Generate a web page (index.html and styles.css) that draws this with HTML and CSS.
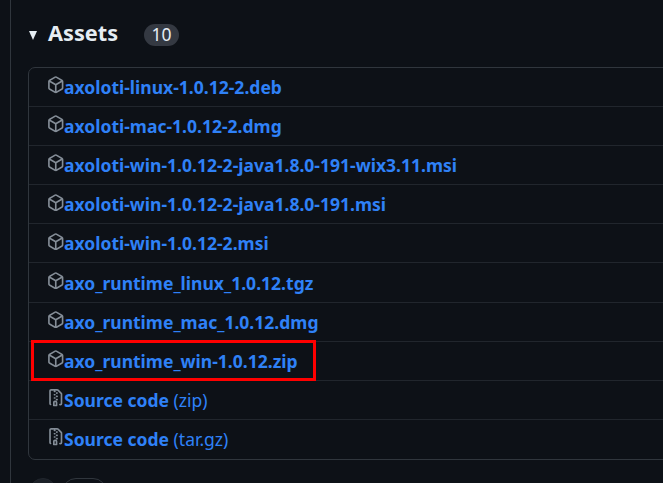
FILE: index.html
```html
<!DOCTYPE html>
<html lang="en">
<head>
<meta charset="utf-8">
<title>Assets</title>
<link rel="stylesheet" href="styles.css">
</head>
<body>
<svg width="0" height="0" class="sprites">
  <symbol id="package" viewBox="0 0 16 16"><path d="m8.878.392 5.25 3.045c.54.314.872.89.872 1.514v6.098a1.75 1.75 0 0 1-.872 1.514l-5.25 3.045a1.75 1.75 0 0 1-1.756 0l-5.25-3.045A1.75 1.75 0 0 1 1 11.049V4.951c0-.624.332-1.201.872-1.514L7.122.392a1.75 1.75 0 0 1 1.756 0ZM7.875 1.69l-4.63 2.685L8 7.133l4.755-2.758-4.63-2.685a.248.248 0 0 0-.25 0ZM2.5 5.677v5.372c0 .09.047.171.125.216l4.625 2.683V8.432Zm6.25 8.271 4.625-2.683a.25.25 0 0 0 .125-.216V5.677L8.75 8.432Z"/></symbol>
  <symbol id="file-zip" viewBox="0 0 16 16"><path d="M3.5 1.75v11.5c0 .09.048.173.126.217a.75.75 0 0 1-.752 1.298A1.748 1.748 0 0 1 2 13.25V1.75C2 .784 2.784 0 3.75 0h5.586c.464 0 .909.185 1.237.513l2.914 2.914c.329.328.513.773.513 1.237v8.586A1.75 1.75 0 0 1 12.25 15h-.5a.75.75 0 0 1 0-1.5h.5a.25.25 0 0 0 .25-.25V4.664a.25.25 0 0 0-.073-.177L9.513 1.573a.25.25 0 0 0-.177-.073H7.25a.75.75 0 0 1 0 1.5h-.5a.75.75 0 0 1 0-1.5h-3a.25.25 0 0 0-.25.25Zm3.75 8.75h.5c.966 0 1.75.784 1.75 1.75v3a.75.75 0 0 1-.75.75h-2.5a.75.75 0 0 1-.75-.75v-3c0-.966.784-1.75 1.75-1.75ZM6 5.25a.75.75 0 0 1 .75-.75h.5a.75.75 0 0 1 0 1.5h-.5A.75.75 0 0 1 6 5.25Zm.75 2.25h.5a.75.75 0 0 1 0 1.5h-.5a.75.75 0 0 1 0-1.5Zm1.25-.75A.75.75 0 0 1 8.75 6h.5a.75.75 0 0 1 0 1.5h-.5A.75.75 0 0 1 8 6.75ZM8.75 3h.5a.75.75 0 0 1 0 1.5h-.5a.75.75 0 0 1 0-1.5ZM8 9.75A.75.75 0 0 1 8.75 9h.5a.75.75 0 0 1 0 1.5h-.5A.75.75 0 0 1 8 9.75Zm-1 2.5v2.25h1v-2.25a.25.25 0 0 0-.25-.25h-.5a.25.25 0 0 0-.25.25Z"/></symbol>
</svg>
<main class="release">
  <header class="head">
    <svg class="caret" viewBox="0 0 8 9"><path d="M0 0h8L4 9z"/></svg>
    <h3>Assets</h3>
    <span class="counter">10</span>
  </header>
  <ul class="assets">
    <li><svg class="icon"><use href="#package"/></svg><a><b>axoloti-linux-1.0.12-2.deb</b></a></li>
    <li><svg class="icon"><use href="#package"/></svg><a><b>axoloti-mac-1.0.12-2.dmg</b></a></li>
    <li><svg class="icon"><use href="#package"/></svg><a><b>axoloti-win-1.0.12-2-java1.8.0-191-wix3.11.msi</b></a></li>
    <li><svg class="icon"><use href="#package"/></svg><a><b>axoloti-win-1.0.12-2-java1.8.0-191.msi</b></a></li>
    <li><svg class="icon"><use href="#package"/></svg><a><b>axoloti-win-1.0.12-2.msi</b></a></li>
    <li><svg class="icon"><use href="#package"/></svg><a><b>axo_runtime_linux_1.0.12.tgz</b></a></li>
    <li><svg class="icon"><use href="#package"/></svg><a><b>axo_runtime_mac_1.0.12.dmg</b></a></li>
    <li class="marked"><svg class="icon"><use href="#package"/></svg><a><b>axo_runtime_win-1.0.12.zip</b></a></li>
    <li><svg class="icon"><use href="#file-zip"/></svg><a><b>Source code</b> (zip)</a></li>
    <li><svg class="icon"><use href="#file-zip"/></svg><a><b>Source code</b> (tar.gz)</a></li>
  </ul>
  <div class="reactions">
    <span class="add"></span>
    <span class="pill"></span>
  </div>
</main>
</body>
</html>
```
FILE: styles.css
```css
*, *::after { box-sizing: border-box; }
body {
  margin: 0;
  height: 483px;
  overflow: hidden;
  background: #0d1117;
  color: #e6edf3;
  font: 17.5px/26px "Noto Sans", sans-serif;
}
.sprites { display: block; }
.release {
  height: 483px;
  margin-left: 10px;
  padding-left: 17px;
  border-left: 1px solid #30363d;
  overflow: hidden;
}
.head {
  display: flex;
  align-items: center;
  height: 67px;
}
.caret { width: 8px; height: 9px; margin: 3px 12px 0 1px; fill: #e6edf3; }
h3 { margin: -2px 0 0 -1px; font-size: 21.7px; font-weight: 700; line-height: 30px; }
.counter {
  width: 35px;
  height: 22px;
  margin: 3px 0 0 26px;
  border-radius: 11px;
  background: #343942;
  font-size: 17.5px;
  line-height: 21px;
  text-align: center;
}
.assets {
  width: 700px;
  height: 393px;
  margin: 0;
  padding: 0;
  list-style: none;
  border: 1px solid #30363d;
  border-radius: 7px;
}
.assets li {
  position: relative;
  display: flex;
  align-items: center;
  height: 39.15px;
  padding-left: 18px;
}
.assets li:first-child { height: 38px; }
.assets li:nth-child(5) { height: 39.2px; }
.assets li:nth-child(4) { height: 39px; }
.assets li + li { border-top: 1px solid #21262d; }
.icon { width: 17.5px; height: 17.5px; margin: -4px -0.5px 0 0; fill: #848d97; }
a { color: #2f81f7; white-space: pre; }
b { font-weight: 700; letter-spacing: 0.01px; }
.marked::after {
  content: "";
  position: absolute;
  left: 2px;
  top: -2px;
  width: 284.5px;
  height: 41.5px;
  border: 3px solid #f00;
  z-index: 1;
}
.reactions { display: flex; gap: 5px; padding: 18px 0 0 1px; }
.add, .pill { height: 28px; border: 1px solid #30363d; border-radius: 14px; }
.add { width: 28px; border-color: #21262d; background: #1b2027; }
.pill { width: 45px; }
```
